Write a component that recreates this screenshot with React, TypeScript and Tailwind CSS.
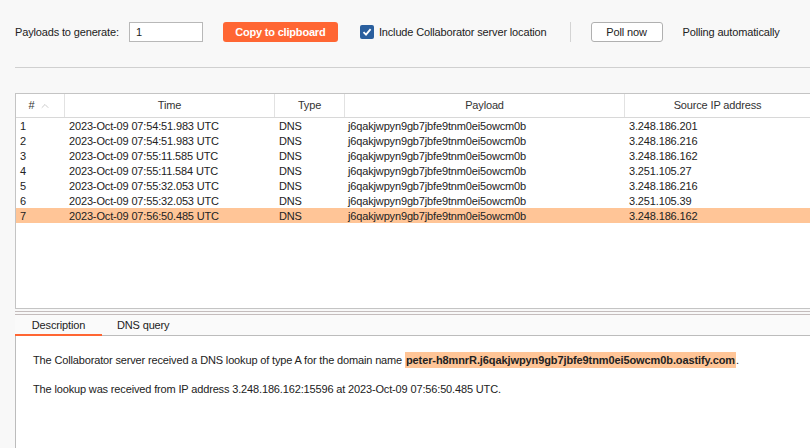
import { ChevronUp } from "lucide-react";

type Row = { id: number; time: string; ip: string };

const PAYLOAD = "j6qakjwpyn9gb7jbfe9tnm0ei5owcm0b";

const rows: Row[] = [
  { id: 1, time: "2023-Oct-09 07:54:51.983 UTC", ip: "3.248.186.201" },
  { id: 2, time: "2023-Oct-09 07:54:51.983 UTC", ip: "3.248.186.216" },
  { id: 3, time: "2023-Oct-09 07:55:11.585 UTC", ip: "3.248.186.162" },
  { id: 4, time: "2023-Oct-09 07:55:11.584 UTC", ip: "3.251.105.27" },
  { id: 5, time: "2023-Oct-09 07:55:32.053 UTC", ip: "3.248.186.216" },
  { id: 6, time: "2023-Oct-09 07:55:32.053 UTC", ip: "3.251.105.39" },
  { id: 7, time: "2023-Oct-09 07:56:50.485 UTC", ip: "3.248.186.162" },
];

const cols = "grid grid-cols-[49px_210px_70px_280px_1fr]";

export default function App() {
  return (
    <div
      className="w-[810px] h-[448px] overflow-hidden bg-[#f8f8f8] text-[11px] tracking-[-0.15px] text-[#222] flex flex-col"
      style={{ fontFamily: '"Liberation Sans", Arial, sans-serif' }}
    >
      {/* TOP BAR */}
      <div className="flex items-center h-[20px] mt-[22px] pl-[15px]">
        <span>Payloads to generate:</span>
        <div className="ml-[10px] w-[74px] h-[20px] bg-white border border-[#b8b8b8] flex items-center px-[6px]">
          1
        </div>
        <button className="ml-[20px] w-[115px] h-[20px] rounded-[3px] bg-[#ff6633] text-white font-bold tracking-[-0.2px]">
          Copy to clipboard
        </button>
        <div className="ml-[22px] w-[14px] h-[14px] rounded-[2px] bg-[#2a5f9e] flex items-center justify-center">
          <svg width="10" height="10" viewBox="0 0 10 10">
            <path d="M1.5 5.2 L4 7.6 L8.6 2.2" fill="none" stroke="white" strokeWidth="1.8" />
          </svg>
        </div>
        <span className="ml-[5px]">Include Collaborator server location</span>
        <div className="ml-[23px] w-px h-[20px] bg-[#d4d4d4]" />
        <button className="ml-[20px] w-[72px] h-[20px] rounded-[3px] bg-white border border-[#b0b0b0]">
          Poll now
        </button>
        <span className="ml-[20px]">Polling automatically</span>
      </div>
      <div className="ml-[15px] mt-[25px] border-t border-[#d0d0d0]" />

      {/* TABLE */}
      <div className="ml-[15px] mt-[25px] h-[216px] bg-white border-l border-t border-b border-[#c4c4c4] flex flex-col">
        <div className={`${cols} h-[24px] border-b border-[#d8d8d8] text-[#333]`}>
          <div className="flex items-center justify-center gap-[5px] border-r border-[#e2e2e2]">
            <span>#</span>
            <ChevronUp size={12} strokeWidth={1} className="text-[#999]" />
          </div>
          <div className="flex items-center justify-center border-r border-[#e2e2e2]">Time</div>
          <div className="flex items-center justify-center border-r border-[#e2e2e2]">Type</div>
          <div className="flex items-center justify-center border-r border-[#e2e2e2]">Payload</div>
          <div className="flex items-center justify-center">Source IP address</div>
        </div>
        {rows.map((r) => (
          <div
            key={r.id}
            className={`${cols} h-[15px] items-center ${r.id === 7 ? "bg-[#ffc597]" : ""}`}
          >
            <span className="pl-[4px]">{r.id}</span>
            <span className="pl-[4px]">{r.time}</span>
            <span className="pl-[4px]">DNS</span>
            <span className="pl-[3px]">{PAYLOAD}</span>
            <span className="pl-[4px]">{r.ip}</span>
          </div>
        ))}
      </div>

      {/* SPLITTER */}
      <div className="ml-[15px] mt-[2px] border-t border-[#c4bcbc]" />
      <div className="ml-[15px] mt-[2px] border-t border-[#c4bcbc]" />

      {/* DETAIL TABS */}
      <div className="ml-[15px] h-[21px] bg-[#fafafa] flex items-stretch border-b border-[#bcbcbc]">
        <div className="w-[87px] flex items-center justify-center border-b-2 border-[#ff6633] mb-[-1px] pt-[1px]">
          Description
        </div>
        <div className="ml-[15px] flex items-center pt-[1px]">DNS query</div>
      </div>
      <div className="ml-[15px] flex-1 bg-white border-l border-[#bcbcbc] pl-[17px] pt-[16px]">
        <p className="h-[16px] flex items-center">
          The Collaborator server received a DNS lookup of type A for the domain name&nbsp;
          <span className="bg-[#ffc597] font-bold text-[#222] tracking-[-0.1px] px-[1px]">
            peter-h8mnrR.j6qakjwpyn9gb7jbfe9tnm0ei5owcm0b.oastify.com
          </span>
          .
        </p>
        <p className="h-[16px] mt-[13px] flex items-center">
          The lookup was received from IP address 3.248.186.162:15596 at 2023-Oct-09 07:56:50.485 UTC.
        </p>
      </div>
    </div>
  );
}
